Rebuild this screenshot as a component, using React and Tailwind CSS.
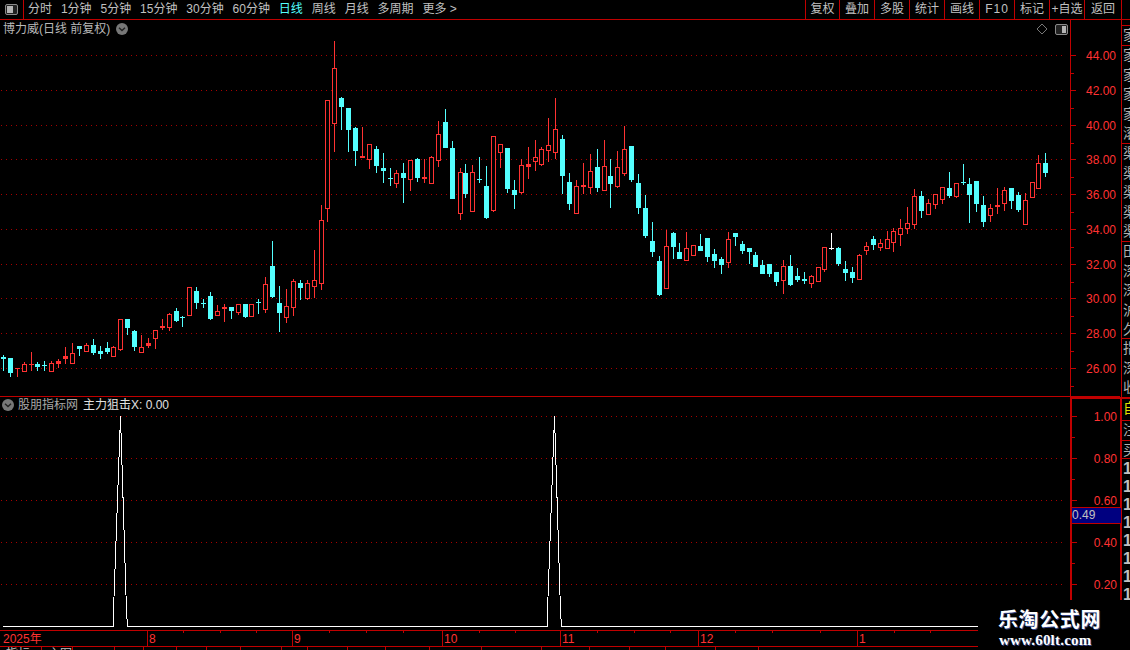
import React from "react";

const RED = "#ff3232";
const CYAN = "#54ffff";
const LINE = "#c00000";

// [x, colour, wick top, body top, body bottom, wick bottom]
const C = [
[3,"c",355,357,359,371],[10,"c",358,358,373,377],[17,"r",368,368,369,377],[24,"r",362,364,371,371],[31,"r",352,364,365,371],
[37,"c",362,364,367,371],[44,"c",361,365,366,371],[51,"r",361,363,371,371],[58,"r",359,361,364,368],[65,"r",347,356,359,364],
[72,"r",343,353,363,363],[79,"c",346,346,349,356],[86,"r",343,345,351,352],[93,"c",339,345,353,355],[100,"c",346,351,354,359],
[107,"c",342,348,352,354],[113,"r",346,347,356,356],[120,"r",319,319,349,351],[127,"c",319,319,328,335],[134,"c",330,331,347,351],
[141,"r",335,347,352,352],[148,"r",338,343,346,348],[155,"r",330,330,338,349],[162,"r",319,326,328,330],[169,"r",313,314,327,331],
[176,"c",308,311,321,322],[182,"c",316,317,318,327],[189,"r",287,287,315,315],[196,"c",287,291,303,309],[203,"c",299,303,304,308],
[210,"c",292,296,319,320],[217,"r",305,311,315,315],[224,"r",304,307,309,322],[231,"c",307,307,311,319],[238,"r",304,304,312,315],
[245,"c",304,304,317,318],[251,"r",304,304,316,316],[258,"c",299,302,303,314],[265,"r",277,284,309,313],[272,"c",241,266,297,298],
[279,"c",286,303,313,332],[286,"r",289,306,317,323],[293,"r",279,281,307,316],[300,"c",280,283,288,300],[307,"r",280,283,298,300],
[314,"r",250,280,286,298],[321,"r",205,220,283,290],[327,"r",100,100,208,222],[334,"r",41,68,123,152],[341,"c",97,98,107,130],
[348,"c",108,108,130,152],[355,"c",127,128,151,166],[362,"r",127,156,158,158],[369,"r",144,144,159,169],[376,"c",146,149,166,173],
[383,"c",153,168,171,183],[390,"c",168,178,179,186],[396,"r",170,173,183,188],[403,"c",163,173,178,203],[410,"r",160,160,179,191],
[417,"c",158,159,178,182],[424,"r",159,177,179,183],[431,"r",156,157,183,183],[438,"r",121,134,160,167],[445,"c",109,122,148,148],
[452,"c",141,148,199,199],[460,"r",168,172,213,220],[465,"c",164,173,194,198],[472,"r",165,172,211,211],[479,"c",157,179,180,183],
[486,"c",166,186,218,219],[493,"r",136,136,210,212],[500,"r",144,144,152,168],[507,"c",148,148,189,193],[514,"c",180,190,195,209],
[521,"r",159,165,192,194],[528,"r",147,164,167,179],[535,"r",140,157,161,171],[541,"r",147,149,164,166],[548,"r",118,145,150,162],
[555,"r",98,129,152,159],[562,"c",135,139,176,194],[569,"c",173,182,204,210],[576,"r",180,186,213,213],[583,"r",163,185,187,194],
[590,"r",154,171,187,194],[597,"c",149,167,188,192],[604,"r",140,166,190,190],[610,"c",159,176,184,208],[617,"r",151,167,186,188],
[624,"r",126,149,173,176],[631,"c",146,146,180,182],[638,"c",174,183,208,214],[645,"c",195,208,236,238],[652,"c",222,241,252,257],
[659,"c",256,261,295,296],[666,"r",230,246,288,288],[673,"c",232,233,247,259],[679,"c",243,252,259,259],[686,"r",232,248,260,260],
[693,"r",245,245,255,255],[700,"c",234,246,251,251],[707,"c",238,238,257,262],[714,"c",249,254,261,268],[721,"c",257,259,265,274],
[728,"r",232,239,262,268],[735,"c",233,233,237,246],[742,"c",241,244,251,254],[749,"c",248,248,252,264],[755,"c",252,255,267,267],
[762,"c",260,265,274,274],[769,"c",264,264,274,277],[776,"c",272,272,282,286],[783,"r",260,266,280,294],[790,"c",255,266,285,286],
[797,"c",268,276,280,282],[804,"c",272,279,281,284],[811,"r",275,276,283,288],[818,"r",267,267,281,281],[824,"r",247,247,269,272],
[831,"w",233,248,249,250],[838,"c",247,248,264,266],[845,"c",261,269,273,281],[852,"c",267,272,278,283],[859,"r",254,255,279,279],
[866,"r",242,246,250,255],[873,"c",236,239,245,250],[880,"r",239,243,247,251],[887,"r",231,239,248,248],[893,"r",228,231,242,252],
[900,"r",219,228,234,246],[907,"r",207,223,228,234],[914,"r",189,196,224,229],[921,"c",191,196,211,218],[928,"r",199,203,214,214],
[935,"r",194,194,204,209],[942,"r",187,187,199,204],[949,"c",172,188,196,198],[956,"r",183,183,196,198],[963,"c",164,182,183,185],
[969,"c",178,184,195,223],[976,"c",181,181,204,212],[983,"c",196,205,222,227],[990,"r",204,208,215,222],[997,"r",188,205,207,214],
[1004,"r",187,190,203,211],[1011,"c",188,188,201,209],[1018,"c",192,195,210,212],[1025,"r",193,200,224,224],[1032,"r",182,182,197,198],
[1038,"r",155,163,188,188],[1045,"c",153,163,173,177],
];

const PRICE = [["44.00",55],["42.00",90],["40.00",125],["38.00",159],["36.00",194],["34.00",229],["32.00",264],["30.00",298],["28.00",333],["26.00",368]];
const IND = [["1.00",416],["0.80",458],["0.60",500],["0.40",542],["0.20",584]];

const FONT = { fontFamily: '"Liberation Sans","Noto Sans CJK SC",sans-serif' };

function Candle({ d }) {
  const [x, k, hi, top, bot, lo] = d;
  const col = k === "r" ? RED : k === "c" ? CYAN : "#ffffff";
  const flat = bot - top <= 3;
  return (
    <g shapeRendering="crispEdges">
      <rect x={x} y={hi} width={1} height={lo - hi} fill={col} />
      {k === "r" && !flat ? (
        <rect x={x - 1.5} y={top + 0.5} width={4} height={bot - top} fill="#000" stroke={col} strokeWidth={1} />
      ) : (
        <rect x={x - 2} y={top} width={5} height={Math.max(1, bot - top)} fill={col} />
      )}
    </g>
  );
}

function Dots({ ys }) {
  return ys.map((y) => (
    <line key={y} x1={1} x2={1066} y1={y + 0.5} y2={y + 0.5} stroke="#a80000" strokeDasharray="1 4" shapeRendering="crispEdges" />
  ));
}

function Axis({ ticks, y0, h }) {
  const step = ticks[1][1] - ticks[0][1];
  return (
    <svg width="50" height={h} viewBox={`1071 ${y0} 50 ${h}`} className="block" style={FONT}>
      {ticks.map(([t, y]) => (
        <g key={t}>
          <rect x={1071} y={y} width={5} height={1} fill={LINE} />
          <rect x={1071} y={Math.round(y + step / 2)} width={3} height={1} fill={LINE} />
          <text x={1116} y={y + 5} textAnchor="end" fontSize="12" fill={RED}>{t}</text>
        </g>
      ))}
    </svg>
  );
}

function Gear({ x, y }) {
  return (
    <svg width="12" height="12" viewBox="0 0 12 12" className="absolute" style={{ left: x, top: y }}>
      <circle cx="6" cy="6" r="6" fill="#777" />
      <path d="M3 4.8 L6 7.6 L9 4.8" stroke="#222" strokeWidth="1.4" fill="none" />
    </svg>
  );
}

function Panel({ flip, className }) {
  return (
    <svg width="13" height="11" viewBox="0 0 13 11" className={className}>
      <rect x="0.5" y="0.5" width="12" height="10" rx="1.5" fill="#222" stroke="#8a8a8a" />
      <rect x={flip ? 2 : 7} y="2" width={flip ? 6 : 4} height="7" fill="#b5b5b5" />
    </svg>
  );
}

const LEFT = [["分时"],["1分钟"],["5分钟"],["15分钟"],["30分钟"],["60分钟"],["日线",1],["周线"],["月线"],["多周期"],["更多 >"]];
const RIGHT = [["复权","w-[34px]"],["叠加","w-[35px]"],["多股","w-[35px]"],["统计","w-[35px]"],["画线","w-[35px]"],["F10","w-[35px] tracking-[1px]"],["标记","w-[35px]"],["+自选","w-[35px]"],["返回","w-[37px]"]];
const MONTHS = [["8",147],["9",292],["10",442],["11",560],["12",698],["1",857]];
const MINOR = [183,220,256,329,366,403,479,515,597,634,670,735,772,820,894,930];
const TABS = [42,31,42,29,33,30,34,41,26,40,38,44,52,60,48,40,36,50,43];

function StripRows({ chars }) {
  return chars.map((c, i) => (
    <div key={i} className="h-[19.6px] shrink-0 pl-[1px] text-[14px] leading-[19.6px] whitespace-nowrap">{c}</div>
  ));
}

export default function App() {
  return (
    <div className="relative flex h-[650px] w-[1130px] flex-col overflow-hidden bg-black text-[12px] text-[#c0c0c0]" style={FONT}>
      <header className="flex h-[20px] shrink-0 items-stretch border-b border-[#c00000]">
        <div className="flex w-[24px] items-center justify-center border-r border-[#c00000] pr-[1px]">
          <Panel flip />
        </div>
        <nav className="flex items-center gap-[8.9px] pl-[4px] leading-[19px]">
          {LEFT.map(([t, on]) => (
            <span key={t} className={on ? "text-[#54ffff]" : ""}>{t}</span>
          ))}
        </nav>
        <div className="ml-auto mr-[8px] flex">
          {RIGHT.map(([t, w]) => (
            <div key={t} className={`flex items-center justify-center whitespace-nowrap border-l border-[#c00000] leading-[19px] ${w}`}>{t}</div>
          ))}
          <div className="w-px bg-[#c00000]" />
        </div>
      </header>

      <main className="flex min-h-0 flex-1">
        <div className="flex w-[1120px] shrink-0 flex-col">
          {/* price panel */}
          <section className="relative flex h-[377px] shrink-0 border-b border-[#c00000]">
            <svg width="1070" height="376" viewBox="0 20 1070 376" className="block shrink-0">
              <Dots ys={PRICE.map((p) => p[1])} />
              {C.map((d) => <Candle key={d[0]} d={d} />)}
            </svg>
            <div className="h-full border-l border-[#c00000]">
              <Axis ticks={PRICE} y0={20} h={376} />
            </div>
            <div className="absolute left-[3px] top-[1px] text-[12px] leading-[17px] text-[#b8b8b8]">博力威(日线 前复权)</div>
            <Gear x={116} y={3} />
            <svg width="10" height="10" viewBox="0 0 10 10" className="absolute left-[1037px] top-[4px]">
              <path d="M5 0 L10 5 L5 10 L0 5 Z" fill="none" stroke="#777" />
            </svg>
            <Panel className="absolute left-[1055px] top-[4px]" />
          </section>

          {/* indicator panel */}
          <section className="relative flex h-[233px] shrink-0">
            <svg width="1070" height="233" viewBox="0 397 1070 233" className="block shrink-0">
              <Dots ys={IND.map((p) => p[1])} />
              <polyline
                points="3,626.5 113.5,626.5 113.5,611 120.5,416 126.5,611 127.5,626.5 547.5,626.5 547.5,611 554.5,416 560.5,611 561.5,626.5 978,626.5"
                fill="none"
                stroke="#fff"
                strokeWidth="1"
                shapeRendering="crispEdges"
              />
            </svg>
            <div className="h-full border-l-2 border-t-2 border-[#c00000]">
              <Axis ticks={IND} y0={399} h={231} />
            </div>
            <Gear x={2} y={2} />
            <div className="absolute left-[18px] top-0 flex gap-[5px] leading-[17px]">
              <span className="text-[#a8a8a8]">股朋指标网</span>
              <span className="text-[#e0e0e0]">主力狙击X: 0.00</span>
            </div>
            <div className="absolute left-[1072px] top-[110px] h-[17px] w-[49px] border-y border-[#c00000] bg-[#000080] leading-[15px] text-[#c0c0c0]">0.49</div>
          </section>

          {/* time axis */}
          <section className="h-[16px] shrink-0 border-t border-[#c00000]">
            <svg width="1120" height="15" viewBox="0 631 1120 15" className="block" style={FONT}>
              <text x={3} y={643} fontSize="12" fill={RED}>2025年</text>
              {MONTHS.map(([m, x]) => (
                <g key={x}>
                  <rect x={x} y={631} width={1} height={15} fill={LINE} />
                  <text x={x + 2} y={643} fontSize="12" fill={RED}>{m}</text>
                </g>
              ))}
              {MINOR.map((x) => <rect key={x} x={x} y={631} width={1} height={2} fill={LINE} />)}
            </svg>
          </section>

          {/* tab strip, mostly below the fold */}
          <footer className="flex h-[5px] shrink-0 overflow-hidden border-t border-[#c00000]">
            {TABS.map((w, i) => (
              <div key={i} style={{ width: w }} className="h-full shrink-0 overflow-hidden border-r border-[#c00000] pl-[6px] leading-[14px] text-[#c0c0c0]">
                {i === 0 ? "指标" : i === 1 ? "主图" : ""}
              </div>
            ))}
          </footer>
        </div>

        {/* cut-off side list */}
        <aside className="flex h-[580px] w-[10px] flex-col overflow-hidden text-[#b0b0b0]">
          <div className="ml-px flex h-[377px] shrink-0 flex-col border-l border-[#c00000]">
            <div className="h-[5px] shrink-0" />
            <div className="h-[20px] shrink-0 overflow-hidden border-t border-[#c00000]"><StripRows chars={["家"]} /></div>
            <div className="h-[98px] shrink-0 overflow-hidden border-t border-[#c00000]"><StripRows chars={["家","家","家","家","滚"]} /></div>
            <div className="h-[98px] shrink-0 overflow-hidden border-t border-[#c00000]"><StripRows chars={["渠","渠","渠","渠","渠"]} /></div>
            <div className="h-[97px] shrink-0 overflow-hidden border-t border-[#c00000]"><StripRows chars={["田","深","深","沪","久"]} /></div>
            <div className="min-h-0 flex-1 overflow-hidden border-t border-[#c00000]"><StripRows chars={["指","深","收"]} /></div>
          </div>
          <div className="flex flex-1 flex-col border-l-2 border-t-2 border-[#c00000]">
            <div className="h-[21px] shrink-0 overflow-hidden text-[#e0e000]"><StripRows chars={["自"]} /></div>
            <div className="h-[20px] shrink-0 overflow-hidden border-t border-[#c00000]"><StripRows chars={["注"]} /></div>
            <div className="h-[18px] shrink-0 overflow-hidden border-t border-[#c00000]"><StripRows chars={["买"]} /></div>
            <div className="flex-1 overflow-hidden border-t border-[#c00000] pt-[1px]">
              {[0,1,2,3,4,5,6,7].map((i) => (
                <div key={i} className="h-[18px] pl-[1px] text-[16px] font-bold leading-[18px] text-[#c0c0c0]">1</div>
              ))}
            </div>
          </div>
        </aside>
      </main>

      {/* watermark */}
      <div className="absolute bottom-0 right-0 flex h-[50px] w-[152px] flex-col items-start bg-black pl-[20px] text-white">
        <div className="mt-[7px] text-[20px] font-bold leading-[24px] tracking-[0.6px] [text-shadow:1px_1px_0_#334488]" style={{ fontFamily: '"Noto Sans CJK SC",sans-serif' }}>乐淘公式网</div>
        <div className="ml-px mt-[2px] text-[15px] font-bold leading-[15px] tracking-[0.2px] [text-shadow:1px_1px_0_#334488]" style={{ fontFamily: '"Liberation Serif",serif' }}>www.60lt.com</div>
      </div>
    </div>
  );
}
